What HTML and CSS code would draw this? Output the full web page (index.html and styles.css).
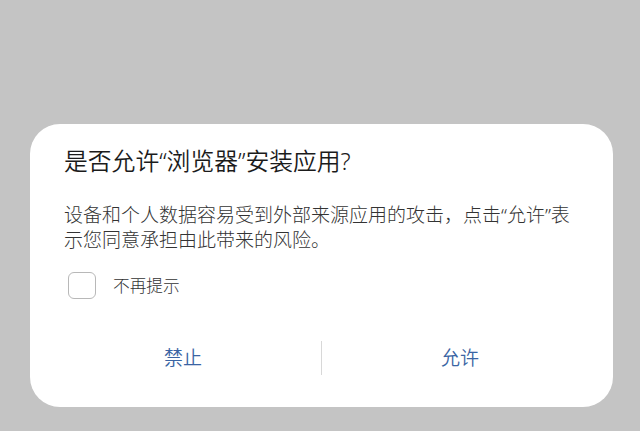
FILE: index.html
```html
<!DOCTYPE html>
<html lang="zh-CN">
<head>
<meta charset="utf-8">
<title>安装应用</title>
<link rel="stylesheet" href="styles.css">
</head>
<body>
<div class="dialog">
  <h1 class="title">是否允许“浏览器”安装应用?</h1>
  <p class="message">设备和个人数据容易受到外部来源应用的攻击，点击“允许”表示您同意承担由此带来的风险。</p>
  <label class="check-row">
    <span class="checkbox"></span>
    <span class="check-label">不再提示</span>
  </label>
  <div class="actions">
    <button class="action">禁止</button>
    <span class="divider"></span>
    <button class="action">允许</button>
  </div>
</div>
</body>
</html>
```

FILE: styles.css
```css
html, body {
  margin: 0;
  padding: 0;
  background: #c4c4c4;
  width: 640px;
  height: 431px;
  overflow: hidden;
  font-family: "Noto Sans", "Noto Sans CJK SC", sans-serif;
}

.dialog {
  box-sizing: border-box;
  margin: 124px 0 0 30px;
  width: 583px;
  height: 283px;
  background: #ffffff;
  border-radius: 30px;
  padding: 22px 15px 0 34px;
  display: flex;
  flex-direction: column;
}

.title {
  margin: 0;
  font-size: 23.8px;
  line-height: 30px;
  font-weight: 350;
  color: #1b1b1b;
}

.message {
  margin: 27px 0 0 0;
  font-size: 19px;
  line-height: 25px;
  font-weight: 300;
  color: #333333;
  width: 516px;
}

.check-row {
  margin-top: 18px;
  display: flex;
  align-items: center;
  gap: 17px;
  height: 28px;
  margin-left: 4px;
}

.checkbox {
  box-sizing: border-box;
  width: 28px;
  height: 27px;
  border: 1.5px solid #b8b8b8;
  border-radius: 6px;
}

.check-label {
  font-size: 16.7px;
  font-weight: 300;
  color: #333333;
}

.actions {
  margin-top: 42px;
  margin-left: -19px;
  display: flex;
  align-items: center;
  height: 34px;
}

.action {
  flex: 1;
  border: 0;
  background: none;
  padding: 0;
  font-family: inherit;
  font-size: 19px;
  font-weight: 350;
  color: #3a64a3;
  line-height: 34px;
}

.divider {
  width: 1px;
  height: 34px;
  background: #d8d8d8;
}
```
